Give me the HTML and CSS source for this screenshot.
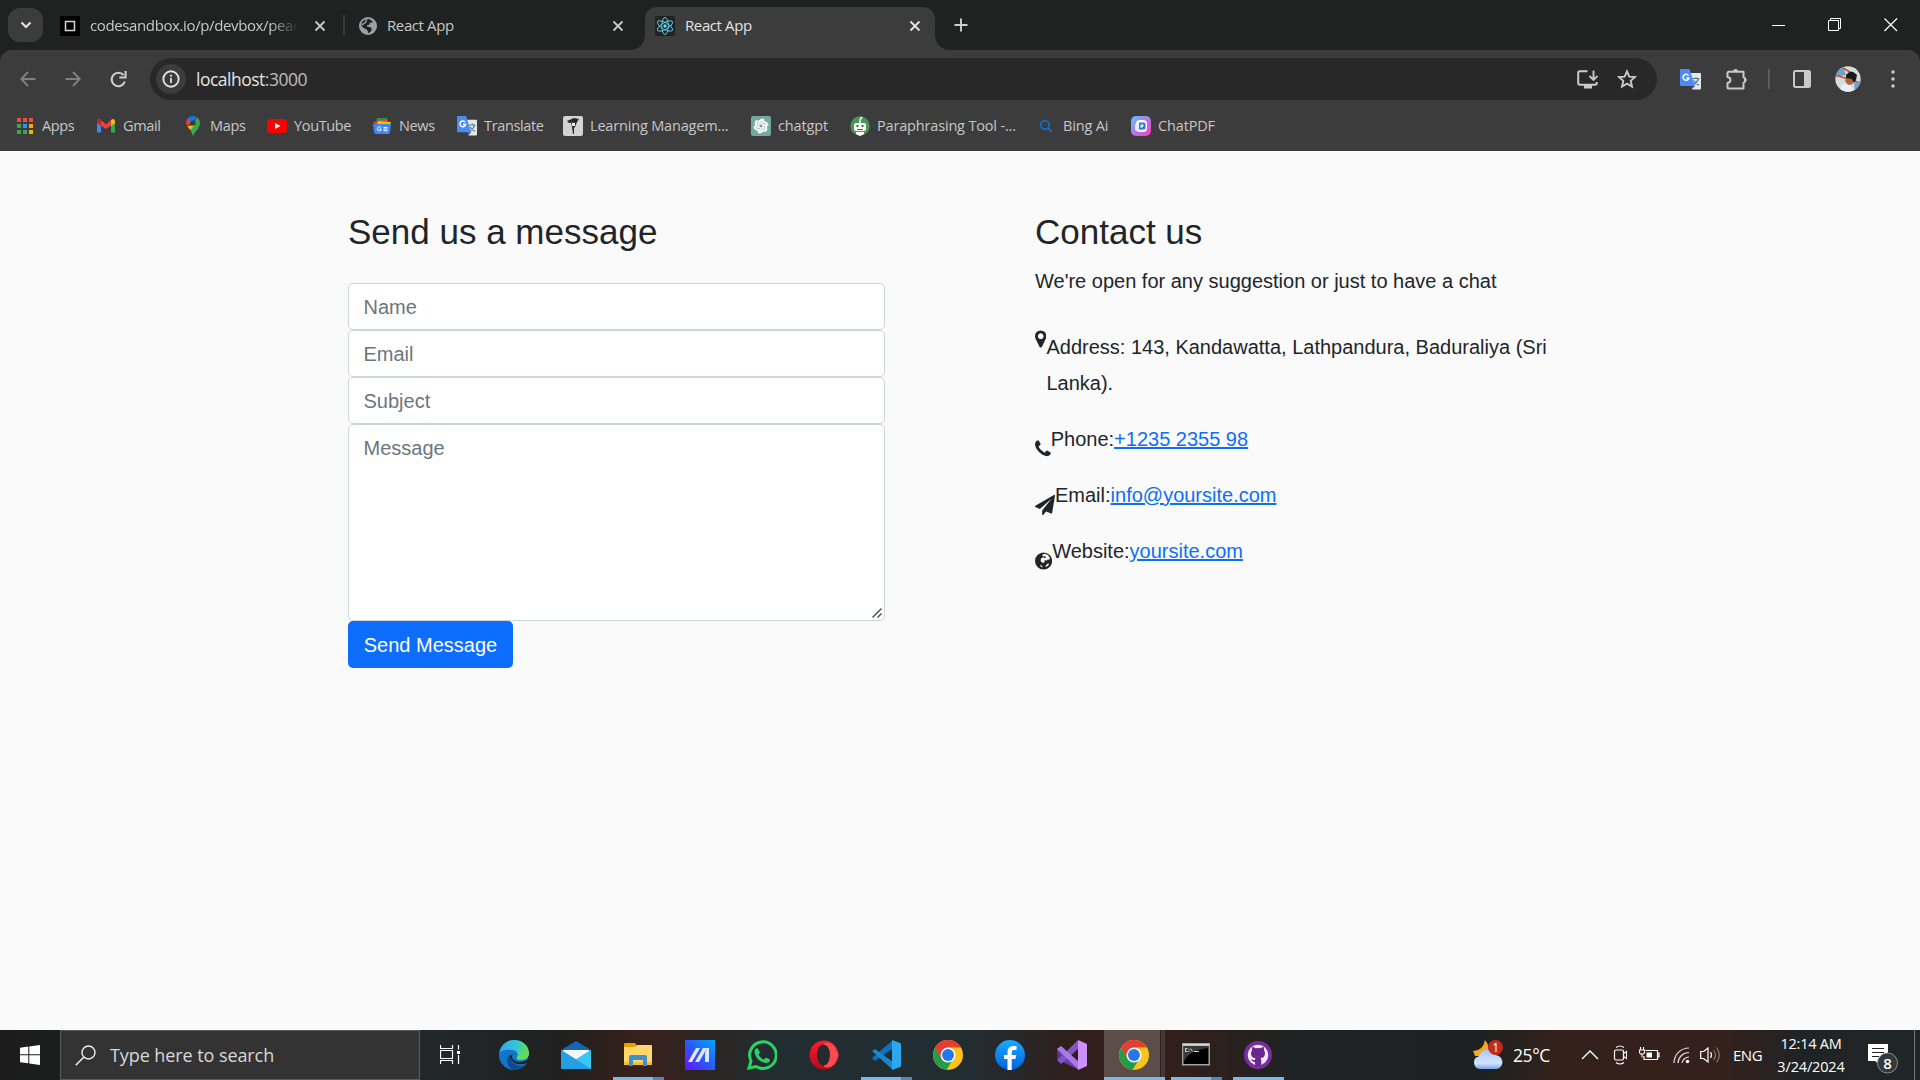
FILE: index.html
```html
<!DOCTYPE html>
<html lang="en">
<head>
<meta charset="utf-8">
<title>React App</title>
<link rel="stylesheet" href="styles.css">
</head>
<body>
<svg class="defs" width="0" height="0">
  <defs>
    <symbol id="x" viewBox="0 0 12 12"><path d="M1.5 1.5l9 9M10.5 1.5l-9 9" fill="none" stroke="currentColor" stroke-width="1.9"/></symbol>
    <symbol id="translate" viewBox="0 0 21 21">
      <path d="M10 4h10a1 1 0 0 1 1 1v14.500a1 1 0 0 1-1 1h-8z" fill="#e3e7ea"/>
      <path d="M12.500 9.500h7M16 8v1.500M18.500 9.500c-.8 3-3 5-5 6M14 11.500c1 2 3 4 5 4.500" stroke="#58788a" stroke-width="1.100" fill="none"/>
      <path d="M11 17h4l-4 3.800z" fill="#3445ad"/>
      <path d="M1 0h8.500l5.500 17H1a1 1 0 0 1-1-1V1a1 1 0 0 1 1-1z" fill="#4c8bf5"/>
      <path d="M8.500 6.500A3 3 0 1 0 9 9H6.300" stroke="#fff" stroke-width="1.500" fill="none"/>
    </symbol>
    <symbol id="chrome" viewBox="0 0 30 30">
      <circle cx="15" cy="15" r="15" fill="#fcc31e"/>
      <path d="M15 15L8.900 18.500 2 7.500a15 15 0 0 0 11.500 22.400l7-11.400z" fill="#259c48"/>
      <path d="M2 7.500A15 15 0 0 1 28 7.500H15L8.500 18.700z" fill="#e43e32"/>
      <circle cx="15" cy="15" r="7.500" fill="#fff"/><circle cx="15" cy="15" r="6" fill="#2877ea"/>
    </symbol>
  </defs>
</svg>

<header class="browser">
  <div class="tabstrip">
    <button class="tab-search"><svg width="12" height="8" viewBox="0 0 12 8"><path d="M1.500 1.500L6 6l4.500-4.500" fill="none" stroke="#e3e3e3" stroke-width="2.200"/></svg></button>
    <div class="tab tab-first">
      <svg width="20" height="20"><path d="M0 0h20v20H0z"/><path d="M5.500 5.500h9v9h-9z" fill="none" stroke="#d5d5d5" stroke-width="1.500"/></svg>
      <span class="tab-title fade">codesandbox.io/p/devbox/peac</span>
      <svg class="close" width="12" height="12"><use href="#x"/></svg>
    </div>
    <div class="tab tab-second">
      <svg width="18" height="18" viewBox="0 0 18 18"><circle cx="9" cy="9" r="9" fill="#9aa0a6"/><path d="M9 2c2 0 3 1 5 3-1 1-2 0-3 1s0 2-2 2c-2 .5-1 2 1 2 2 0 3 1 2.500 3-.5 2-2 2-3 3.500C9 15 9 14 8 13c-1-1.500-3-1-5.500-4C2 5 5 2 9 2z" fill="#202221"/><path d="M8 2c-2 2 0 4-3 4.500L3 8" stroke="#9aa0a6" stroke-width="1.500" fill="none"/></svg>
      <span class="tab-title">React App</span>
      <svg class="close" width="12" height="12"><use href="#x"/></svg>
    </div>
    <div class="tab tab-active">
      <svg width="20" height="20" viewBox="0 0 20 20"><rect width="20" height="20" rx="2" fill="#202322"/><g fill="none" stroke="#61c6e0" stroke-width="1"><ellipse cx="10" cy="10" rx="8.500" ry="3.300" transform="rotate(30 10 10)"/><ellipse cx="10" cy="10" rx="8.500" ry="3.300" transform="rotate(90 10 10)"/><ellipse cx="10" cy="10" rx="8.500" ry="3.300" transform="rotate(150 10 10)"/></g><circle cx="10" cy="10" r="1.700" fill="#61dafb"/></svg>
      <span class="tab-title">React App</span>
      <svg class="close" width="12" height="12"><use href="#x"/></svg>
    </div>
    <svg class="newtab" width="14" height="14"><path d="M7 .5v13M.5 7h13" stroke="#d0d0d0" stroke-width="1.900"/></svg>
    <div class="window-controls">
      <svg width="14" height="14"><path d="M0 7.500h13" stroke="#fff"/></svg>
      <svg width="14" height="14"><path d="M.5 2.500h10v10H.5zM2.500 2.500v-2h10v10h-2" fill="none" stroke="#fff"/></svg>
      <svg width="14" height="14"><path d="M.5.5l12.500 12.500M13 .5L.5 13" stroke="#fff" stroke-width="1.200"/></svg>
    </div>
  </div>

  <div class="toolbar">
    <div class="nav">
      <svg width="16" height="16" viewBox="0 0 16 16"><path d="M15.500 8H1.500M8 1L1.300 8 8 15" fill="none" stroke="#808080" stroke-width="1.900"/></svg>
      <svg width="16" height="16" viewBox="0 0 16 16"><path d="M.5 8h14M8 1l6.700 7L8 15" fill="none" stroke="#808080" stroke-width="1.900"/></svg>
      <svg width="17" height="17" viewBox="0 0 17 17"><path d="M14.800 10.500A6.700 6.700 0 1 1 13.600 4.200M15.600 0v6.500H9.300" fill="none" stroke="#cdcdcd" stroke-width="2.100"/></svg>
    </div>
    <div class="omnibox">
      <span class="info"><svg width="18" height="18"><circle cx="9" cy="9" r="7.700" fill="none" stroke="#e3e3e3" stroke-width="1.900"/><path d="M9 8v5M9 4.700v2" stroke="#e3e3e3" stroke-width="1.800"/></svg></span>
      <span class="url">localhost<i>:3000</i></span>
      <svg class="install" width="21" height="19" viewBox="0 0 21 19"><path d="M10.500 1.200H3A1.800 1.800 0 0 0 1.200 3v10A1.800 1.800 0 0 0 3 14.800h15a1.800 1.800 0 0 0 1.800-1.800v-1" fill="none" stroke="#c9c9c9" stroke-width="2"/><path d="M7 15h8v3.500H7z" fill="#c9c9c9"/><path d="M16.500.5V9M12.500 6l4 4 4-4" fill="none" stroke="#c9c9c9" stroke-width="1.900"/></svg>
      <svg width="20" height="20" viewBox="0 0 20 20"><path d="M10 2.300l2.300 5.300 5.700.5-4.300 3.800 1.300 5.700-5-3-5 3 1.300-5.700L2 8.100l5.700-.5z" fill="none" stroke="#c9c9c9" stroke-width="1.900"/></svg>
    </div>
    <div class="actions">
      <svg width="21" height="21"><use href="#translate"/></svg>
      <svg width="21" height="21" viewBox="0 0 21 21"><path d="M2.500 2.800h15v5.400a3 3 0 0 1 0 5.600v5.700h-15a1 1 0 0 1-1-1v-4.500c4-.5 4-5.500 0-6V3.800a1 1 0 0 1 1-1z" fill="none" stroke="#c9c9c9" stroke-width="2" stroke-linejoin="round"/><path d="M7 2.500a2.500 2.500 0 0 1 5 0zM18 8.500a2.500 2.500 0 0 1 0 5z" fill="#c9c9c9"/></svg>
      <span class="sep"></span>
      <svg width="18" height="18"><rect x="1" y="1" width="16" height="16" rx="1.500" fill="none" stroke="#c9c9c9" stroke-width="2"/><path d="M11 1h6v16h-6z" fill="#c9c9c9"/></svg>
      <svg width="26" height="26" viewBox="0 0 26 26"><clipPath id="av"><circle cx="13" cy="13" r="12.700"/></clipPath><g clip-path="url(#av)"><path d="M0 0h26v26H0z" fill="#d5dcda"/><path d="M0 4l8-4 3 9-11 2z" fill="#68a6d2"/><path d="M0 9l26 8M8 2l7 4" stroke="#d9432e" stroke-width="1.500"/><path d="M6 20q7-7 14 6H5z" fill="#e8eef5"/><path d="M19 17l7-2v10h-6z" fill="#739cce"/><path d="M12 10l7 0-1 8-5 1-3-4z" fill="#ad6342"/><path d="M11 9q5-7 11 0l-1 5-2 3-2-4-6-1z" fill="#17191b"/><path d="M1 19l5 6H0z" fill="#9daf57"/></g></svg>
      <svg width="4" height="18"><g fill="#c9c9c9"><circle cx="2" cy="2" r="1.800"/><circle cx="2" cy="9" r="1.800"/><circle cx="2" cy="16" r="1.800"/></g></svg>
    </div>
  </div>

  <nav class="bookmarks">
    <a><svg width="20" height="20"><path d="M2 2h4v4H2zM8 2h4v4H8zM14 2h4v4h-4z" fill="#ee4b3e"/><path d="M2 8h4v4H2zM2 14h4v4H2z" fill="#34a853"/><path d="M8 8h4v4H8z" fill="#2196f3"/><path d="M8 14h4v4H8z" fill="#34a853"/><path d="M14 8h4v4h-4zM14 14h4v4h-4z" fill="#fbab04"/></svg><span>Apps</span></a>
    <a><svg width="20" height="20"><path d="M1 5v11.500h4V9z" fill="#4285f4"/><path d="M15 9v7.500h4V5z" fill="#34a853"/><path d="M1 5q0-2 2-2 1 0 7 5.500V13L1 7z" fill="#ea4335"/><path d="M1 5q0-3 4-1v5.500L1 7z" fill="#c5221f"/><path d="M10 8.500L15 4v5.500L10 13z" fill="#ea4335"/><path d="M15 4q3-2.500 4 1v2l-4 3z" fill="#fbbc04"/></svg><span>Gmail</span></a>
    <a><svg width="20" height="20"><path d="M10 0a7 7 0 0 0-6 3l4 5 6-6.500A7 7 0 0 0 10 0z" fill="#1a73e8"/><path d="M4 3q-2 4 .5 7l4-4z" fill="#ea4335"/><path d="M14 1.500q3 2 3 5.500t-2.500 6.500C12 16 11 18 10 20c-1-3-2-5-3-6.500z" fill="#34a853"/><path d="M4.500 10L12 9l-5 5z" fill="#fbbc04"/><circle cx="10" cy="7" r="2.600" fill="#3c3c3c"/></svg><span>Maps</span></a>
    <a><svg width="20" height="20"><rect x="0" y="3" width="20" height="14" rx="3.500" fill="#f00"/><path d="M8 7v6l5.500-3z" fill="#fff"/></svg><span>YouTube</span></a>
    <a><svg width="20" height="20"><path d="M5 2h10l1 6H4z" fill="#23964a"/><path d="M1 6l14-3 1 6H3z" fill="#e94235"/><path d="M6 5l13 1-2 6H4z" fill="#fbbc04"/><path d="M1 8h18l-1 8q-.3 2-2 2H4q-1.700 0-2-2z" fill="#4285f4"/><path d="M9 11.500a2 2 0 1 0 0 2.500v-1H7.500M11.500 11.500h4M11.500 13h4M11.500 14.700h4" stroke="#fff" fill="none"/></svg><span>News</span></a>
    <a><svg width="20" height="20"><use href="#translate"/></svg><span>Translate</span></a>
    <a><svg width="20" height="20"><rect width="20" height="20" rx="2" fill="#d3d3d3"/><path d="M4 5l7-3 5 1-2 3-8 1zM8 7l6-1-2 5-1 1v6h-1l-1-7z" fill="#292929"/><path d="M9 7h3v3H9z" fill="#eee"/></svg><span class="long">Learning Managem...</span></a>
    <a><svg width="20" height="20"><rect width="20" height="20" rx="2" fill="#74aa9c"/><g fill="none" stroke="#fff" stroke-width="1.100"><path id="petal" d="M8 10.800V6.200a3.100 3.100 0 0 1 5.200-2.200M7.200 9V6.500l4-2.300 3 1.800"/><use href="#petal" transform="rotate(60 10 10)"/><use href="#petal" transform="rotate(120 10 10)"/><use href="#petal" transform="rotate(180 10 10)"/><use href="#petal" transform="rotate(240 10 10)"/><use href="#petal" transform="rotate(300 10 10)"/></g></svg><span class="wide">chatgpt</span></a>
    <a><svg width="20" height="20"><circle cx="10" cy="10" r="9.700" fill="#499557"/><path d="M10 7q-.5-4 2-6" stroke="#fff" stroke-width="1.500" fill="none"/><rect x="4" y="7" width="12" height="8" rx="2" fill="#fff"/><path d="M6.500 9h2v2h-2zM11.500 9h2v2h-2zM7 13h6v1H7z" fill="#2f733d"/><path d="M6 16h8v2l-4 2-4-2z" fill="#fff"/></svg><span class="long">Paraphrasing Tool -...</span></a>
    <a><svg width="20" height="20"><circle cx="9" cy="9" r="4.300" fill="none" stroke="#0e6dc1" stroke-width="2"/><path d="M12 12l4 4" stroke="#0e6dc1" stroke-width="2"/></svg><span class="wide">Bing Ai</span></a>
    <a><svg width="20" height="20"><defs><linearGradient id="pdf" x2="1" y2="1"><stop stop-color="#59c7ff"/><stop offset=".5" stop-color="#b578ec"/><stop offset="1" stop-color="#ff38b2"/></linearGradient></defs><rect width="20" height="20" rx="5" fill="url(#pdf)"/><rect x="5" y="4" width="11" height="12" rx="4" fill="#fff"/><path d="M4 8h8v7H6q-2 0-2-2z" fill="#e9edff"/><path d="M8 6.500h5q1.500 0 1.500 1.500v4q0 1.500-1.500 1.500H8z" fill="#3273f5"/><path d="M10 12V8.800h2v1.700h-2" fill="none" stroke="#fff"/></svg><span class="wide">ChatPDF</span></a>
  </nav>
</header>

<main class="page">
  <section class="message">
    <h2>Send us a message</h2>
    <form>
      <input type="text" placeholder="Name">
      <input type="text" placeholder="Email">
      <input type="text" placeholder="Subject">
      <div class="field">
        <textarea placeholder="Message"></textarea>
        <svg class="grip" width="10" height="10"><path d="M.5 9.500l9-9M5.500 9.500l4-4" stroke="#444" stroke-width="1.400"/></svg>
      </div>
      <button type="button">Send Message</button>
    </form>
  </section>
  <section class="contact">
    <h2>Contact us</h2>
    <p class="lead">We're open for any suggestion or just to have a chat</p>
    <div class="row row-address">
      <svg width="11.430" height="20" viewBox="384 0 1024 1792"><path d="M1152 640q0-106-75-181t-181-75-181 75-75 181 75 181 181 75 181-75 75-181zm256 0q0 109-33 179l-364 774q-16 33-47.500 52t-67.500 19-67.500-19-46.500-52l-365-774q-33-70-33-179 0-212 150-362t362-150 362 150 150 362z"/></svg>
      <p>Address: 143, Kandawatta, Lathpandura, Baduraliya (Sri Lanka).</p>
    </div>
    <div class="row">
      <svg width="15.710" height="20" viewBox="192 0 1408 1792"><path d="M1600 1240q0 27-10 70.500t-21 68.500q-21 50-122 106-94 51-186 51-27 0-53-3.500t-57.500-12.500-47-14.500-55.500-20.500-49-18q-98-35-175-83-127-79-264-216t-216-264q-48-77-83-175-3-9-18-49t-20.500-55.500-14.500-47-12.500-57.500-3.500-53q0-92 51-186 56-101 106-122 25-11 68.500-21t70.500-10q14 0 21 3 18 6 53 76 11 19 30 54t35 63.500 31 53.500q3 4 17.500 25t21.500 35.500 7 28.500q0 20-28.500 50t-62 55-62 53-28.500 46q0 9 5 22.500t8.500 20.500 14 24 11.500 19q76 137 174 235t235 174q2 1 19 11.500t24 14 20.500 8.500 22.500 5q18 0 46-28.500t53-62 55-62 50-28.500q14 0 28.500 7t35.500 21.500 25 17.500q25 15 53.500 31t63.500 35 54 30q70 35 76 53 3 7 3 21z"/></svg>
      <p>Phone:<a href="#">+1235 2355 98</a></p>
    </div>
    <div class="row">
      <svg width="20" height="20" viewBox="0 0 1792 1792"><path d="M1764 11q33 24 27 64l-256 1536q-5 29-32 45-14 8-31 8-11 0-24-5l-453-185-242 295q-18 23-49 23-13 0-22-4-19-7-30.500-23.500t-11.500-36.500v-349l864-1059-1069 925-395-162q-37-14-40-55-2-40 32-59l1664-960q15-9 32-9 20 0 36 11z"/></svg>
      <p>Email:<a href="#">info@yoursite.com</a></p>
    </div>
    <div class="row">
      <svg width="17.140" height="20" viewBox="0 0 17.140 20"><circle cx="8.570" cy="10" r="8.570"/><path d="M6.800 4l2.700-1.300 3.500 1.200 2 3-.8 1.800-1.700-.3-.7 1.300-1.300-.8-1.200 1 .5 1.200-1.800 1-1.500-1-1-1.800 1-2.300 1.700-.7.200-1.200zM12.500 12.500l1.700.2-1.200 2-2.500 1.300.2-1.700 1.300-.8zM5 13.700l2.300 1.300.2 1.500-1.800-1z" fill="#fafafa"/><path d="M8 6l2-1 1 1.200-1.500 1z"/></svg>
      <p>Website:<a href="#">yoursite.com</a></p>
    </div>
  </section>
</main>

<footer class="taskbar">
  <div class="start"><svg width="20" height="20"><path d="M0 2.800L8.300 1.600V9.300H0zM9.300 1.500L20 0v9.300H9.300zM0 10.300h8.300V18.300L0 17.200zM9.300 10.300H20V20L9.300 18.500z" fill="#fff"/></svg></div>
  <div class="search"><svg width="21" height="21"><circle cx="13.500" cy="7.500" r="6.500" fill="none" stroke="#eee" stroke-width="1.400"/><path d="M9 12L.7 20.300" stroke="#eee" stroke-width="1.500"/></svg><span>Type here to search</span></div>
  <div class="taskview"><svg width="20" height="20"><path d="M.5 0v3.500h12V0M.5 5.500h12v8H.5zM.5 19v-3.500h12V19M18.500 0v4.500M18.500 10v9" fill="none" stroke="#fff" stroke-width="1.200"/><path d="M17 6h3v3h-3z" fill="#fff"/></svg></div>
  <div class="apps">
    <div><svg width="30" height="30"><defs><linearGradient id="e1"><stop stop-color="#2ba8ee"/><stop offset=".6" stop-color="#37c6cf"/><stop offset="1" stop-color="#66e04f"/></linearGradient></defs><circle cx="15" cy="15" r="15" fill="#1276cc"/><path d="M.3 13C2 4 9 0 15 0c9 0 15 6 15 13 0 5-4 7-8 7-3 0-5-1-4-3 2-3 0-7-6-7C6 9 2 11 .3 13z" fill="url(#e1)"/><path d="M11 14c-1 6 4 12 11 12 3 0 4-2 6-3-3 5-8 7-13 7C8 28 6 19 11 14z" fill="#104a91"/><path d="M14 14c-4 5 4 11 14 6l2-5v6l-2 2c-7 3-16 1-17-7z" fill="#20221f"/><path d="M30 13c0 5-4 7-8 7-3 0-5-1-4-3l6-8z" fill="#5fdb5c"/></svg></div>
    <div><svg width="30" height="30"><path d="M0 10l15-9 15 9v5H0z" fill="#1464b7"/><path d="M2 10h26v9H2z" fill="#f6f6f6"/><path d="M0 10l15 9.500L30 10v19H0z" fill="#28a4e6"/><path d="M0 29l15-9.500L30 10v19z" fill="#38c6f4"/><path d="M15 19.500L30 29H0L0 10z" fill="#259ee4"/></svg></div>
    <div class="open multi"><svg width="30" height="30"><path d="M1 4q0-1 1-1h10l2 3v4H1z" fill="#e6a100"/><path d="M1 7h11l2-2h14q1 0 1 1v19H1z" fill="#ffd768"/><path d="M1 22h28v3H1z" fill="#f4bd35"/><path d="M6 26V17q0-2 2-2h14q2 0 2 2v9h-4v-6H10v6z" fill="#3c91d4"/></svg></div>
    <div><svg width="30" height="30"><defs><linearGradient id="mz" y1="1" x2="1" y2="0"><stop stop-color="#6513ff"/><stop offset=".5" stop-color="#295bff"/><stop offset="1" stop-color="#00a8ff"/></linearGradient></defs><path d="M0 0h30v30H0z" fill="url(#mz)"/><path d="M3 22l8-14h4L7 22zM10 22l8-14h4l-8 14zM22 8h2v14h-4V13z" fill="#e4e5ff"/></svg></div>
    <div><svg width="30" height="30"><path d="M2 28l2-7A13.300 13.300 0 1 1 9 26.500z" fill="none" stroke="#25d366" stroke-width="3"/><path d="M10.500 8l2.500 4.500-1.500 2q2 4 5.500 5l2-2 4 2q0 3.500-4.500 3.500Q9 21 7.500 12q0-3.500 3-4z" fill="#25d366"/></svg></div>
    <div><svg width="30" height="30"><defs><linearGradient id="op" x2="0" y2="1"><stop stop-color="#ff1b2d"/><stop offset="1" stop-color="#b30b19"/></linearGradient></defs><ellipse cx="15" cy="15" rx="14.500" ry="14.500" fill="url(#op)"/><path d="M15 3q10-3 14.500 12Q26 30 15 27z" fill="#fb4a50"/><ellipse cx="14.500" cy="15" rx="6.500" ry="10.500" fill="#242b2e"/></svg></div>
    <div class="open multi"><svg width="30" height="30"><path d="M1 18L21 1v8L4 21z" fill="#0b74bf"/><path d="M1 11l3-2 18 13v8z" fill="#1688d2"/><path d="M21 0l8 3q1 .5 1 1v22q0 .5-1 1l-8 3z" fill="#2da8f0"/></svg></div>
    <div><svg width="30" height="30"><use href="#chrome"/></svg></div>
    <div><svg width="30" height="30"><defs><linearGradient id="fb" x2="0" y2="1"><stop stop-color="#19aaff"/><stop offset="1" stop-color="#0062e0"/></linearGradient></defs><circle cx="15" cy="15" r="15" fill="url(#fb)"/><path d="M12.500 30V19H9v-4h3.500v-3q0-6 6-6h3v4H19q-2.300 0-2.300 2.300V15h4.500l-.7 4h-3.800v11z" fill="#fff"/></svg></div>
    <div><svg width="30" height="30"><path d="M0 9l4-3 18 18v6L4 21l-4-1z" fill="#6540a4"/><path d="M0 20l4-3L21 0v9L4 24z" fill="#8055c3"/><path d="M0 9v12l3-6z" fill="#52338d"/><path d="M4 6l18 16v8L0 9z" fill="#aa79e7"/><path d="M21 0l9 4v22l-9 4z" fill="#cb91ff"/></svg></div>
    <div class="open multi active"><svg width="30" height="30"><use href="#chrome"/></svg></div>
    <div class="open multi cmd"><svg width="30" height="30"><path d="M1 3h28v22.500H1z" fill="#9da3a6"/><path d="M2.500 6h25v18h-25z" fill="#000"/><path d="M3 6h24v2q-18 2-24 13z" fill="#393939"/><path d="M2 4h26v1.500H2z" fill="#d5dde1"/><path d="M6.500 8.500H4.500v3h2M8 9v1M8 11v1M9.500 8.500l2 3M13 11.500h5" stroke="#ddd" fill="none"/></svg></div>
    <div class="open"><svg width="28" height="28" viewBox="0 0 28 28"><circle cx="14" cy="14" r="14" fill="#7a2ca0"/><circle cx="14" cy="14" r="10.300" fill="#f3eaf7"/><path d="M11 25v-4q-3 0-4-3 3 2 4 .5l.5-1.200Q7 16.500 7 12.500q0-2 1-3-.3-2 .3-3.500 1.700 0 3.200 1.300 2.500-.6 5 0Q18 6 19.700 6q.6 1.500.3 3.500 1 1 1 3 0 4-4.500 4.800.8 1 .8 2.700v5z" fill="#682791"/></svg></div>
  </div>
  <div class="tray">
    <div class="weather"><svg width="30" height="30"><defs><linearGradient id="cl" x2="0" y2="1"><stop stop-color="#a9c9f8"/><stop offset=".7" stop-color="#d2e3ff"/><stop offset="1" stop-color="#7ba5ec"/></linearGradient></defs><path d="M12 0q7 8 0 16H2l-2-5q10 0 12-11z" fill="#f5a623"/><path d="M7 29a6.500 6.500 0 0 1-1-12.800 9 9 0 0 1 17-1A7 7 0 0 1 24 29z" fill="url(#cl)"/><circle cx="22.500" cy="7.500" r="7.500" fill="#c42b1c"/><text x="22.500" y="12" text-anchor="middle" font-size="12" fill="#fff">1</text></svg><span>25°C</span></div>
    <svg width="18" height="10"><path d="M1 9l8-8 8 8" fill="none" stroke="#fff" stroke-width="1.400"/></svg>
    <svg width="16" height="20"><path d="M3 2.500q4-3 8 0M3 17.500q4 3 8 0M10.500 8.500l3-2v7l-3-2" fill="none" stroke="#fff" stroke-width="1.100"/><rect x="1.500" y="5" width="9" height="10" rx="1.500" fill="none" stroke="#fff" stroke-width="1.200"/></svg>
    <svg width="21" height="16"><path d="M6.500 3.500h12v9H5V9M19 6h1v4h-1" fill="none" stroke="#fff" stroke-width="1.200"/><path d="M7.500 5.500h5.500v5H7.500z" fill="#fff"/><path d="M1.500 0v3M4.500 0v3M.5 3h5v2.500l-1 1.500h-3L.5 5.500zM3 7v3.500" fill="none" stroke="#fff" stroke-width="1.100"/></svg>
    <svg width="17" height="17"><path d="M1 16A15 15 0 0 1 16 1M5 16A11 11 0 0 1 16 5.500M9 16a7 7 0 0 1 7-6" fill="none" stroke="#ddd" stroke-width="1.200"/><circle cx="14.500" cy="14.500" r="1.800" fill="#fff"/></svg>
    <svg width="21" height="18"><path d="M.7 5.500h3L8 2v14l-4.300-3.500h-3z" fill="none" stroke="#fff" stroke-width="1.200"/><path d="M10.500 6q2 3 0 6" fill="none" stroke="#fff" stroke-width="1.200"/><path d="M13.500 4q4 5 0 10M16.500 1.500q5.500 7.500 0 15" fill="none" stroke="#877b76" stroke-width="1.200"/></svg>
    <span class="lang">ENG</span>
    <div class="clock"><span class="time">12:14 AM</span><span>3/24/2024</span></div>
    <div class="notify"><svg width="32" height="32"><path d="M0 1h20v17h-8v4l-5-4H0z" fill="#fff"/><path d="M4 5.500h12M4 9.500h12M4 13.500h7" stroke="#222" stroke-width="1.200"/><circle cx="19.500" cy="20" r="10" fill="#35393a" stroke="#8c8c8c"/><text x="19.500" y="25.500" text-anchor="middle" font-size="15" font-weight="600" fill="#fff">8</text></svg></div>
    <span class="peek"></span>
  </div>
</footer>
</body>
</html>
```
FILE: styles.css
```css
* { box-sizing: border-box; }

body {
  margin: 0;
  height: 1080px;
  overflow: hidden;
  display: flex;
  flex-direction: column;
  background: #fafafa;
  font-family: "Open Sans", "Noto Sans", sans-serif;
}

svg { display: block; flex: none; }
.defs { position: absolute; }

/* Browser chrome */
.browser { height: 151px; background: #202221; flex: none; }

.tabstrip {
  height: 50px;
  display: flex;
  align-items: center;
  padding-left: 8px;
}
.tab-search {
  width: 35px;
  height: 34px;
  border: 0;
  border-radius: 12px;
  background: #3c3c3c;
  display: grid;
  place-items: center;
  padding: 0;
}
.tab {
  display: flex;
  align-items: center;
  height: 43px;
  margin-top: 7px;
  padding-bottom: 6px;
  color: #c7c7c7;
}
.tab-title {
  flex: 1;
  margin-left: 10px;
  padding-bottom: 2px;
  white-space: nowrap;
  font-size: 15px;
  letter-spacing: -0.4px;
  line-height: 24px;
}
.fade {
  letter-spacing: -0.38px;
  -webkit-mask-image: linear-gradient(90deg, #000 86%, transparent);
  mask-image: linear-gradient(90deg, #000 86%, transparent);
}
.close { margin-left: 15px; }
.tab-first { width: 302px; padding-left: 17px; padding-right: 19px; }
.tab-first .tab-title { width: 209px; flex: none; }
.tab-second {
  width: 300px;
  padding: 0 21px 6px 14px;
  position: relative;
}
.tab-second::before {
  content: "";
  position: absolute;
  left: -2px;
  top: 8px;
  width: 2px;
  height: 20px;
  background: #3c3c3c;
}
.tab-active {
  position: relative;
  width: 290px;
  padding: 0 14px 6px 10px;
  border-radius: 12px 12px 0 0;
  background: #3c3c3c;
  color: #e3e3e3;
}
.tab-active::before, .tab-active::after {
  content: "";
  position: absolute;
  bottom: 0;
  width: 14px;
  height: 14px;
}
.tab-active::before { left: -14px; background: radial-gradient(circle at 0 0, transparent 13.5px, #3c3c3c 14px); }
.tab-active::after { right: -14px; background: radial-gradient(circle at 100% 0, transparent 13.5px, #3c3c3c 14px); }
.newtab { margin-left: 19px; }
.window-controls { display: flex; gap: 42px; margin-left: auto; padding-right: 22px; }

.toolbar {
  height: 52px;
  display: flex;
  align-items: center;
  padding-top: 6px;
  background: #3c3c3c;
  border-radius: 12px 12px 0 0;
}
.nav { display: flex; align-items: center; gap: 29px; width: 150px; padding-left: 20px; }
.omnibox {
  width: 1507px;
  height: 42px;
  display: flex;
  align-items: center;
  border-radius: 21px;
  background: #282828;
  padding: 0 20px 0 6px;
}
.info {
  width: 30px;
  height: 30px;
  display: grid;
  place-items: center;
  border-radius: 50%;
  background: #3c3c3c;
}
.url {
  margin-left: 10px;
  font-size: 17.5px;
  letter-spacing: -0.5px;
  color: #e3e3e3;
}
.url i { font-style: normal; color: #bdbdbd; }
.install { margin-left: auto; margin-right: 19px; }
.actions {
  flex: 1;
  display: grid;
  grid-template-columns: 46px 42px 25px 42px 56px auto;
  align-items: center;
  padding-left: 23px;
}
.sep { width: 2px; height: 20px; background: #5c5c5c; }

.bookmarks {
  height: 49px;
  display: grid;
  grid-template-columns: 81px 87px 84px 105px 85px 106px 188px 99px 186px 95px auto;
  align-items: center;
  padding: 0 0 1px 15px;
  background: #3c3c3c;
}
.bookmarks a {
  display: flex;
  align-items: center;
  gap: 7px;
  white-space: nowrap;
  font-size: 14.5px;
  letter-spacing: -0.35px;
  color: #c7c7c7;
}
.bookmarks span { padding-bottom: 2px; }
.bookmarks .long { letter-spacing: -0.17px; }
.bookmarks .wide { letter-spacing: -0.15px; }

/* Contact page */
.page {
  flex: 1;
  display: flex;
  gap: 150px;
  padding: 60px 0 0 348px;
  font-family: "Liberation Sans", Arial, sans-serif;
  font-size: 20px;
  color: #212529;
}
.message, .contact { width: 537px; }
h2 { margin: 0; font-size: 35px; line-height: 42px; font-weight: 400; }
form { display: flex; flex-direction: column; align-items: flex-start; margin-top: 30px; }
input, textarea {
  display: block;
  width: 100%;
  height: 47px;
  padding: 9px 15px 7px 14.5px;
  border: 1px solid #ced4da;
  border-radius: 5px;
  background: #fff;
  font: inherit;
  line-height: 30px;
}
.field { position: relative; width: 100%; }
textarea { height: 197px; padding-top: 8px; resize: none; }
.grip { position: absolute; right: 3px; bottom: 3px; }
::placeholder { color: #6c757d; opacity: 1; }
form button {
  width: 165px;
  height: 47px;
  padding: 2px 0 0;
  border: 0;
  border-radius: 5px;
  background: #0d6efd;
  color: #fff;
  font: inherit;
}
.contact p { margin: 0; line-height: 36px; }
.contact .lead { margin: 10px 0 30px; }
.row { display: flex; height: 36px; margin-bottom: 20px; fill: #212529; }
.row svg { margin-top: 18px; }
.row-address { height: 72px; }
.row-address svg { margin-top: 0; }
.row a { color: #0d6efd; }

/* Taskbar */
.taskbar {
  height: 50px;
  flex: none;
  display: flex;
  background: linear-gradient(90deg, #1c1c1c 0, #222728 440px, #202020 560px, #38211a 640px, #2c2523 710px, #222d32 780px, #222d32 970px, #301f1b 1080px, #301f1b 1190px, #202323 1290px, #1d2122 1480px, #35211b 1560px, #35211b 1720px, #202325 1800px, #202628 100%);
  color: #fff;
}
.start { width: 60px; display: grid; place-items: center; }
.search {
  width: 360px;
  display: flex;
  align-items: center;
  padding-left: 14px;
  gap: 14px;
  border: 1px solid #5b5b5b;
  background: #333;
  color: #d8d8d8;
  font-size: 18px;
  letter-spacing: -0.08px;
}
.taskview { width: 63px; padding: 15px 0 0 20px; }
.apps { display: grid; grid-template-columns: repeat(13, 62px); }
.apps > div { display: grid; place-items: center; position: relative; }
.apps > .cmd { padding-right: 1px; }
.open::after {
  content: "";
  position: absolute;
  left: 6px;
  bottom: 0;
  width: 51px;
  height: 3px;
  background: #76b9ed;
}
.multi::after { background: linear-gradient(90deg, #76b9ed 40px, #5486b3 40px); }
.active { background: linear-gradient(90deg, transparent 1px, #5c4d49 1px, #5c4d49 57px, #30211d 57px, #30211d 58px, #463834 58px); }
.active::after { left: 1px; width: 61px; background: #76b9ed; }
.tray {
  flex: 1;
  display: grid;
  grid-template-columns: 108px 32px 26px 34px 27px 33px 41px 74px 52px auto;
  align-items: center;
  padding-left: 184px;
}
.weather { display: flex; align-items: center; gap: 10px; font-size: 17.5px; letter-spacing: -0.4px; }
.lang { font-size: 15px; letter-spacing: -0.5px; }
.clock {
  display: flex;
  flex-direction: column;
  align-items: center;
  font-size: 14.5px;
  line-height: 23px;
  letter-spacing: -0.15px;
}
.time { letter-spacing: -0.25px; }
.notify { padding: 8px 0 0 20px; }
.peek { width: 1px; height: 50px; background: #777; margin-left: 14px; }
```
